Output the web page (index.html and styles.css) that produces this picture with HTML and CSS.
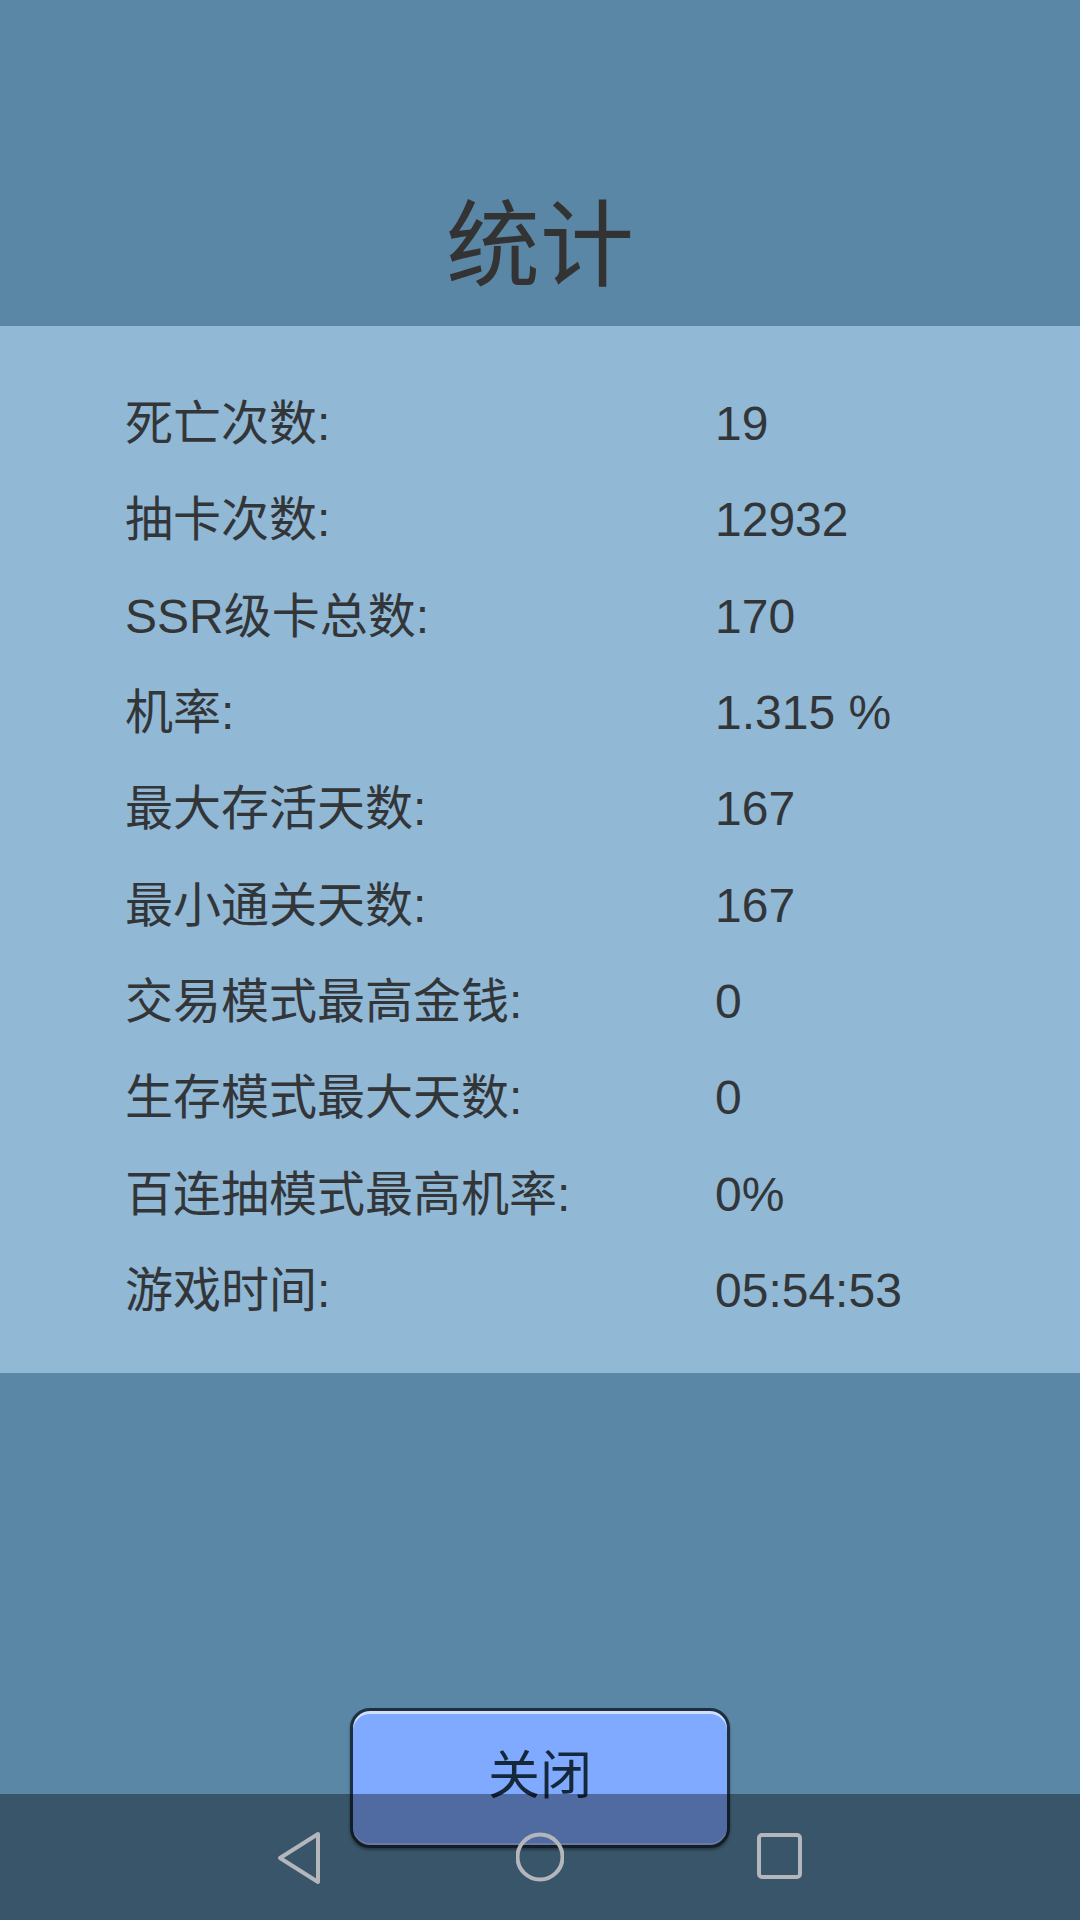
FILE: index.html
```html
<!DOCTYPE html>
<html lang="zh-CN">
<head>
<meta charset="utf-8">
<title>统计</title>
<link rel="stylesheet" href="styles.css">
</head>
<body>
<div class="screen">
  <header class="header"><h1 class="title">统计</h1></header>
  <section class="panel">
    <div class="row"><span class="label">死亡次数:</span><span class="value">19</span></div>
    <div class="row"><span class="label">抽卡次数:</span><span class="value">12932</span></div>
    <div class="row"><span class="label">SSR级卡总数:</span><span class="value">170</span></div>
    <div class="row"><span class="label">机率:</span><span class="value">1.315 %</span></div>
    <div class="row"><span class="label">最大存活天数:</span><span class="value">167</span></div>
    <div class="row"><span class="label">最小通关天数:</span><span class="value">167</span></div>
    <div class="row"><span class="label">交易模式最高金钱:</span><span class="value">0</span></div>
    <div class="row"><span class="label">生存模式最大天数:</span><span class="value">0</span></div>
    <div class="row"><span class="label">百连抽模式最高机率:</span><span class="value">0%</span></div>
    <div class="row"><span class="label">游戏时间:</span><span class="value">05:54:53</span></div>
  </section>
  <div class="actions"><button class="close-btn">关闭</button></div>
  <nav class="navbar">
    <svg class="nav-icon" viewBox="0 0 48 56" width="48" height="56"><path d="M42 5 L4 29 L42 53 Z" fill="none" stroke="#b3b7bb" stroke-width="4" stroke-linejoin="round"/></svg>
    <svg class="nav-icon" viewBox="0 0 48 56" width="48" height="56"><circle cx="24" cy="28" r="22.5" fill="none" stroke="#b3b7bb" stroke-width="4"/></svg>
    <svg class="nav-icon" viewBox="0 0 48 56" width="48" height="56"><rect x="3" y="6" width="41" height="42" rx="3" fill="none" stroke="#b3b7bb" stroke-width="4"/></svg>
  </nav>
</div>
</body>
</html>
```
FILE: styles.css
```css
html, body {
  margin: 0;
  padding: 0;
}
body {
  width: 1080px;
  height: 1920px;
  overflow: hidden;
  background: #5b87a6;
  font-family: "Liberation Sans", "Noto Sans CJK SC", sans-serif;
  color: #333638;
}
.screen {
  position: relative;
  width: 1080px;
  height: 1920px;
  display: flex;
  flex-direction: column;
}
.header {
  height: 326px;
  display: flex;
  justify-content: center;
  align-items: center;
}
.title {
  margin: 0;
  padding-top: 150px;
  font-family: "Noto Sans CJK SC", sans-serif;
  font-size: 94px;
  font-weight: 400;
  line-height: 1;
  letter-spacing: 0;
  color: #333333;
}
.panel {
  background: #91b8d5;
  height: 1047px;
  box-sizing: border-box;
  padding: 50px 0 0 125px;
  display: flex;
  flex-direction: column;
}
.row {
  height: 96.3px;
  display: grid;
  grid-template-columns: 590px 1fr;
  align-items: center;
  font-size: 48px;
  line-height: 1;
}
.label, .value {
  white-space: nowrap;
}
.actions {
  display: flex;
  justify-content: center;
  padding-top: 335px;
}
.close-btn {
  width: 380px;
  height: 140px;
  box-sizing: border-box;
  border: 3px solid #1f2f3f;
  border-radius: 20px;
  background: #7faaff;
  box-shadow: inset 0 3px 0 #cfe0ff, inset 0 -2px 0 #a9c4ff, 0 2px 3px rgba(0,0,0,0.35);
  font-family: "Noto Sans CJK SC", sans-serif;
  font-size: 52px;
  color: #15283a;
  padding: 0 0 12px 0;
  line-height: 1;
}
.navbar {
  position: absolute;
  left: 0;
  bottom: 0;
  width: 1080px;
  height: 126px;
  background: rgba(0, 0, 0, 0.37);
  display: flex;
  justify-content: center;
  align-items: center;
  gap: 192px;
}
.nav-icon {
  display: block;
}
```
